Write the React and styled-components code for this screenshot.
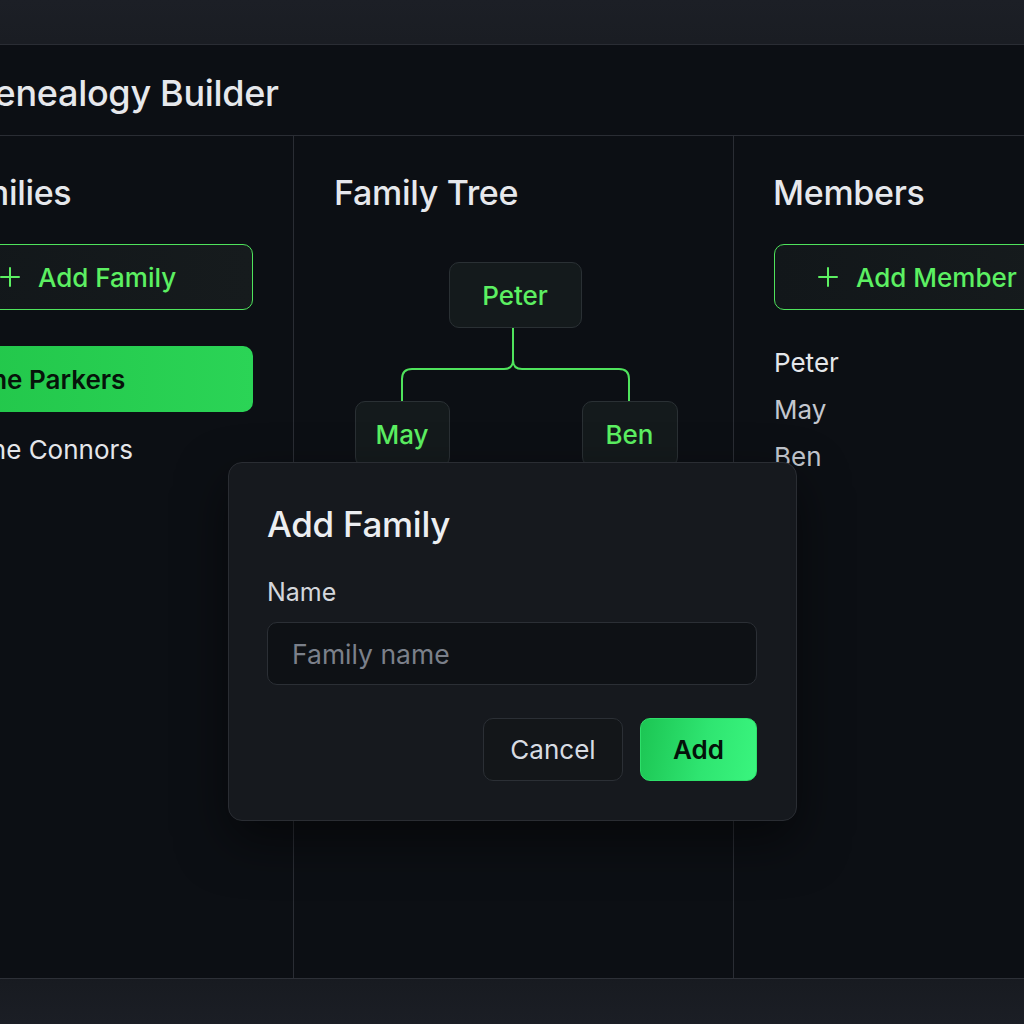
import React from "react";
import styled, { createGlobalStyle } from "styled-components";

const Global = createGlobalStyle`
  * { box-sizing: border-box; }
  html, body { margin: 0; padding: 0; background: #1a1d23; }
  body { font-family: Inter, "Noto Sans", "Liberation Sans", sans-serif; overflow: hidden; }
`;

const Screen = styled.div`
  position: relative;
  width: 1024px;
  height: 1024px;
  overflow: hidden;
  padding-top: 44px;
  background: linear-gradient(180deg, #1c1f26 0%, #1a1d23 4%, #15181d 92%, #1b1e25 100%);
`;

const Frame = styled.div`
  margin-left: -84px;
  width: 1197px;
  height: 935px;
  background: #0c0f14;
  border-top: 1px solid #2a2d34;
  border-bottom: 1px solid #2d3037;
  display: flex;
  flex-direction: column;
`;

const Header = styled.header`
  height: 91px;
  flex-shrink: 0;
  display: flex;
  align-items: center;
  padding: 5px 0 0 52px;
  border-bottom: 1px solid #2a2d34;
`;

const AppTitle = styled.h1`
  margin: 0;
  font-size: 36px;
  font-weight: 500;
  letter-spacing: -0.3px;
  color: #e6e8ec;
`;

const Body = styled.div`
  flex: 1;
  display: grid;
  grid-template-columns: 378px 440px 379px;
`;

const Column = styled.section`
  padding: 36px 40px 0;
  border-right: ${(p) => (p.$last ? "none" : "1px solid #2a2d34")};
  display: flex;
  flex-direction: column;
`;

const ColTitle = styled.h2`
  margin: 0 0 0 ${(p) => p.$indent || 0}px;
  height: 42px;
  line-height: 42px;
  font-size: 34px;
  font-weight: 500;
  letter-spacing: -0.3px;
  color: #e6e8ec;
`;

const OutlineButton = styled.button`
  margin-top: 30px;
  height: 66px;
  width: 100%;
  flex-shrink: 0;
  display: flex;
  align-items: center;
  gap: 18px;
  padding-left: 43px;
  border: 1.5px solid #4fe35c;
  border-radius: 10px;
  background: linear-gradient(90deg, #12171a, #161b1d);
  color: #5cf062;
  font-family: inherit;
  font-size: 26px;
  font-weight: 500;
  cursor: pointer;
`;

const FamilyList = styled.div`
  margin-top: 36px;
  display: flex;
  flex-direction: column;
  gap: 4px;
`;

const FamilyItem = styled.div`
  height: 66px;
  display: flex;
  align-items: center;
  padding-left: 18px;
  border-radius: 10px;
  font-size: 26px;
  font-weight: ${(p) => (p.$active ? 600 : 400)};
  color: ${(p) => (p.$active ? "#06130a" : "#e4e6ea")};
  background: ${(p) =>
    p.$active ? "linear-gradient(90deg, #22c64a, #2bd456)" : "transparent"};
`;

const Tree = styled.div`
  margin-top: 48px;
  padding-left: 3px;
  display: flex;
  flex-direction: column;
  align-items: center;
`;

const Node = styled.div`
  height: 66px;
  min-width: ${(p) => p.$w}px;
  display: flex;
  align-items: center;
  justify-content: center;
  padding-top: 1px;
  background: #141a1c;
  border: 1.5px solid #2a3034;
  border-radius: 10px;
  color: #5cf062;
  font-size: 26px;
  font-weight: 500;
`;

const Children = styled.div`
  display: flex;
  gap: 132px;
  padding-left: 2px;
`;

const MemberList = styled.div`
  margin-top: 29px;
  display: flex;
  flex-direction: column;
`;

const Member = styled.div`
  height: 47px;
  display: flex;
  align-items: center;
  font-size: 26px;
  color: ${(p) => p.$c};
`;

const Modal = styled.div`
  position: absolute;
  left: 228px;
  top: 462px;
  width: 569px;
  padding: 40px 39px 39px 38px;
  background: #16191e;
  border: 1.5px solid #2a2d33;
  border-radius: 14px;
  box-shadow: 0 20px 50px rgba(0, 0, 0, 0.5);
  display: flex;
  flex-direction: column;
`;

const ModalTitle = styled.h3`
  margin: 0;
  height: 42px;
  line-height: 42px;
  font-size: 35px;
  font-weight: 500;
  letter-spacing: -0.3px;
  color: #eceef1;
`;

const Label = styled.label`
  margin-top: 32px;
  font-size: 25px;
  color: #d4d7dc;
  line-height: 30px;
`;

const Input = styled.input`
  margin-top: 15px;
  height: 63px;
  flex-shrink: 0;
  width: 100%;
  padding: 0 24px;
  background: #0e1115;
  border: 1.5px solid #2b2f35;
  border-radius: 10px;
  color: #e6e8ec;
  font-family: inherit;
  font-size: 26.5px;
  outline: none;
  &::placeholder { color: #7b808a; }
`;

const Actions = styled.div`
  margin-top: 33px;
  display: flex;
  justify-content: flex-end;
  gap: 17px;
`;

const Btn = styled.button`
  height: 63px;
  width: ${(p) => p.$w}px;
  border-radius: 10px;
  font-family: inherit;
  font-size: 26px;
  cursor: pointer;
  border: 1.5px solid ${(p) => (p.$primary ? "#2ee06a" : "#2b2f35")};
  background: ${(p) =>
    p.$primary ? "linear-gradient(100deg, #1cc553 0%, #2fe571 55%, #3af57e 100%)" : "#131619"};
  color: ${(p) => (p.$primary ? "#04120a" : "#d8dce2")};
  font-weight: ${(p) => (p.$primary ? 600 : 400)};
`;

const Plus = () => (
  <svg width="20" height="20" viewBox="0 0 20 20" fill="none">
    <path d="M10 1v18M1 10h18" stroke="#5cf062" strokeWidth="2" strokeLinecap="round" />
  </svg>
);

const Connector = () => (
  <svg width="232" height="73" viewBox="0 0 232 73" fill="none" style={{ display: "block" }}>
    <path
      d="M114 0 V32 Q114 41 105 41 H13 Q3 41 3 51 V73 M114 32 Q114 41 123 41 H220 Q230 41 230 51 V73"
      stroke="#4fe35c"
      strokeWidth="2"
    />
  </svg>
);

export default function App() {
  return (
    <>
      <Global />
      <Screen>
        <Frame>
          <Header>
            <AppTitle>Genealogy Builder</AppTitle>
          </Header>
          <Body>
            <Column>
              <ColTitle $indent={-15}>Families</ColTitle>
              <OutlineButton>
                <Plus />
                Add Family
              </OutlineButton>
              <FamilyList>
                <FamilyItem $active>The Parkers</FamilyItem>
                <FamilyItem>The Connors</FamilyItem>
              </FamilyList>
            </Column>
            <Column>
              <ColTitle>Family Tree</ColTitle>
              <Tree>
                <Node $w={133}>Peter</Node>
                <Connector />
                <Children>
                  <Node $w={95}>May</Node>
                  <Node $w={96}>Ben</Node>
                </Children>
              </Tree>
            </Column>
            <Column $last>
              <ColTitle $indent={-1}>Members</ColTitle>
              <OutlineButton>
                <Plus />
                Add Member
              </OutlineButton>
              <MemberList>
                <Member $c="#e4e6ea">Peter</Member>
                <Member $c="#c3c7cf">May</Member>
                <Member $c="#c3c7cf">Ben</Member>
              </MemberList>
            </Column>
          </Body>
        </Frame>
        <Modal>
          <ModalTitle>Add Family</ModalTitle>
          <Label>Name</Label>
          <Input placeholder="Family name" />
          <Actions>
            <Btn $w={140}>Cancel</Btn>
            <Btn $primary $w={117}>Add</Btn>
          </Actions>
        </Modal>
      </Screen>
    </>
  );
}
